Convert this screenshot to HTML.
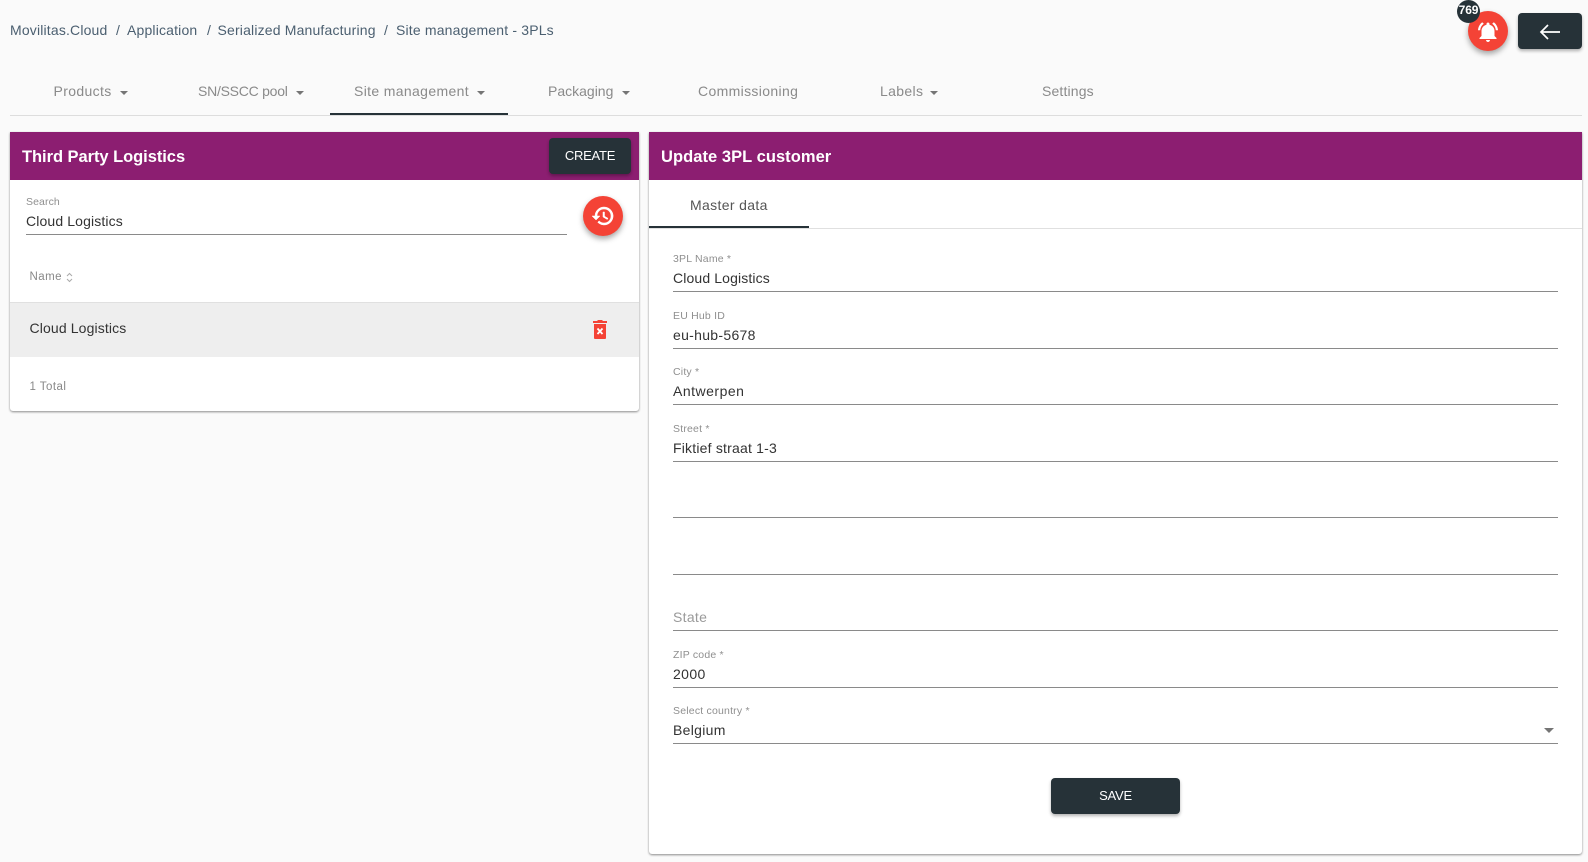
<!DOCTYPE html>
<html><head><meta charset="utf-8"><title>Site management - 3PLs</title>
<style>
html,body{margin:0;padding:0;width:1588px;height:862px;overflow:hidden;background:#fafafa;font-family:"Liberation Sans",sans-serif}
.a{position:absolute;white-space:nowrap}
.crumb{top:22px;height:16px;line-height:16px;font-size:14px;color:#4b5f70;letter-spacing:.17px}
.tab{top:82px;height:18px;line-height:18px;font-size:14px;letter-spacing:.35px;color:#8a8a8a}
.car{width:0;height:0;border-left:4.5px solid transparent;border-right:4.5px solid transparent;border-top:4.5px solid #757575;top:91px}
.panel{background:#fff;border-radius:0 0 3px 3px;box-shadow:0 1px 2px rgba(0,0,0,.45)}
.head{background:#8c1e71;height:48px;top:132px}
.title{top:146.500px;height:20px;line-height:20px;font-size:16.500px;font-weight:bold;color:#fff}
.btn{background:#263238;border-radius:4px;color:#fff;text-align:center;font-size:13px;letter-spacing:-.25px;box-shadow:0 2px 3px rgba(0,0,0,.3)}
.lab{height:12px;line-height:12px;font-size:10.500px;color:#8f8f8f;letter-spacing:.2px;margin-top:.5px}
.val{height:18px;line-height:18px;font-size:14px;color:#333;letter-spacing:.13px}
.line{left:673px;width:885px;height:1px;background:#8a8a8a}
.fab{border-radius:50%;background:#f44336;width:40px;height:40px;box-shadow:0 3px 6px rgba(0,0,0,.35)}
</style></head>
<body>
<div class="a crumb" style="left:10px">Movilitas.Cloud</div>
<div class="a crumb" style="left:116px">/</div>
<div class="a crumb" style="left:127px">Application</div>
<div class="a crumb" style="left:207px">/</div>
<div class="a crumb" style="left:217.500px">Serialized Manufacturing</div>
<div class="a crumb" style="left:384px">/</div>
<div class="a crumb" style="left:396px">Site management - 3PLs</div>

<div class="a fab" style="left:1468px;top:11px"></div>
<svg class="a" style="left:1476px;top:20px" width="24" height="24" viewBox="0 0 24 24" fill="#fff"><path d="M12 22c1.100 0 2-.9 2-2h-4c0 1.100.9 2 2 2zm6.500-6v-5c0-3.100-2-5.600-5-6.300V4c0-.8-.7-1.500-1.500-1.500s-1.500.7-1.500 1.500v.7c-3 .7-5 3.200-5 6.300v5l-2 2v1h17v-1l-2-2z"/><path d="M7.800 3.800 6.200 2.200C3.800 4 2.200 6.900 2 10.200h2.200c.2-2.600 1.500-4.900 3.600-6.400zM19.800 10.200H22c-.2-3.300-1.800-6.200-4.200-8l-1.600 1.600c2.100 1.500 3.400 3.800 3.600 6.400z"/></svg>
<div class="a" style="left:1457px;top:0;width:23px;height:23px;border-radius:50%;background:#263238;color:#fff;font-size:12px;font-weight:bold;text-align:center;line-height:21px;letter-spacing:-.1px">769</div>
<div class="a btn" style="left:1518px;top:13px;width:64px;height:36px"></div>
<svg class="a" style="left:1538px;top:20px" width="24" height="24" viewBox="0 0 24 24" fill="none" stroke="#fff" stroke-width="1.700"><path d="M22 12H3M10 5l-7 7 7 7"/></svg>

<div class="a tab" style="left:53.500px">Products</div><div class="a car" style="left:120px"></div>
<div class="a tab" style="left:198px;letter-spacing:-.25px">SN/SSCC pool</div><div class="a car" style="left:296px"></div>
<div class="a tab" style="left:354px">Site management</div><div class="a car" style="left:477px"></div>
<div class="a tab" style="left:548px;letter-spacing:0">Packaging</div><div class="a car" style="left:622px"></div>
<div class="a tab" style="left:698px">Commissioning</div>
<div class="a tab" style="left:880px">Labels</div><div class="a car" style="left:930px"></div>
<div class="a tab" style="left:1042px;letter-spacing:.15px">Settings</div>
<div class="a" style="left:10px;top:115px;width:1572px;height:1px;background:#ddd"></div>
<div class="a" style="left:330px;top:113px;width:178px;height:2px;background:#263238"></div>

<!-- left panel -->
<div class="a panel" style="left:10px;top:132px;width:629px;height:279px"></div>
<div class="a head" style="left:10px;width:629px"></div>
<div class="a title" style="left:22px;letter-spacing:-.05px">Third Party Logistics</div>
<div class="a btn" style="left:549px;top:138px;width:82px;height:36px;line-height:36px">CREATE</div>
<div class="a lab" style="left:26px;top:195px;letter-spacing:.1px">Search</div>
<div class="a val" style="left:26px;top:212px">Cloud Logistics</div>
<div class="a" style="left:26px;top:234px;width:541px;height:1px;background:#8a8a8a"></div>
<div class="a fab" style="left:583px;top:196px"></div>
<svg class="a" style="left:591px;top:204px" width="24" height="24" viewBox="0 0 24 24" fill="#fff" stroke="#fff" stroke-width=".5"><path d="M13 3a9 9 0 0 0-9 9H1l3.900 3.900.1.100L9 12H6c0-3.900 3.100-7 7-7s7 3.100 7 7-3.100 7-7 7c-1.900 0-3.700-.8-4.900-2.100l-1.400 1.400A9 9 0 1 0 13 3zm-1 5v5l4.300 2.500.7-1.200-3.500-2.100V8z"/></svg>
<div class="a" style="left:29.500px;top:270px;height:14px;line-height:14px;font-size:11.500px;color:#888;letter-spacing:.45px">Name</div>
<svg class="a" style="left:66px;top:272px" width="7" height="11" viewBox="0 0 7 11" fill="none" stroke="#aaa"><path d="M1 4l2.500-2.500L6 4M1 7l2.500 2.500L6 7"/></svg>
<div class="a" style="left:10px;top:302px;width:629px;height:55px;background:#eee;border-top:1px solid #e0e0e0;box-sizing:border-box"></div>
<div class="a val" style="left:29.500px;top:319px">Cloud Logistics</div>
<svg class="a" style="left:590px;top:318px" width="20" height="22" viewBox="0 0 20 22" fill="#f44336"><path d="M3 3h4l1-1h4l1 1h4v2H3zM4 6h12v14a1 1 0 0 1-1 1H5a1 1 0 0 1-1-1z"/><path d="M7.500 10.500l5 5.500M12.500 10.500l-5 5.500" stroke="#fff" stroke-width="1.800"/></svg>
<div class="a" style="left:29.500px;top:379.500px;height:14px;line-height:14px;font-size:11.500px;color:#888;letter-spacing:.45px">1 Total</div>

<!-- right panel -->
<div class="a panel" style="left:649px;top:132px;width:933px;height:722px"></div>
<div class="a head" style="left:649px;width:933px"></div>
<div class="a title" style="left:661px;letter-spacing:.05px">Update 3PL customer</div>
<div class="a val" style="left:690px;top:196px;color:#555;letter-spacing:.35px">Master data</div>
<div class="a" style="left:649px;top:228px;width:933px;height:1px;background:#e0e0e0"></div>
<div class="a" style="left:649px;top:226px;width:160px;height:2px;background:#263238"></div>

<div class="a lab" style="left:673px;top:252px">3PL Name *</div>
<div class="a val" style="left:673px;top:269px">Cloud Logistics</div>
<div class="a line" style="top:291px"></div>
<div class="a lab" style="left:673px;top:309px">EU Hub ID</div>
<div class="a val" style="left:673px;top:326px;letter-spacing:.3px">eu-hub-5678</div>
<div class="a line" style="top:348px"></div>
<div class="a lab" style="left:673px;top:365px">City *</div>
<div class="a val" style="left:673px;top:382px;letter-spacing:.5px">Antwerpen</div>
<div class="a line" style="top:404px"></div>
<div class="a lab" style="left:673px;top:422px">Street *</div>
<div class="a val" style="left:673px;top:439px;letter-spacing:.2px">Fiktief straat 1-3</div>
<div class="a line" style="top:461px"></div>
<div class="a line" style="top:517px"></div>
<div class="a line" style="top:574px"></div>
<div class="a val" style="left:673px;top:608px;color:#9a9a9a;letter-spacing:.3px">State</div>
<div class="a line" style="top:630px"></div>
<div class="a lab" style="left:673px;top:648px">ZIP code *</div>
<div class="a val" style="left:673px;top:665px;letter-spacing:.4px">2000</div>
<div class="a line" style="top:687px"></div>
<div class="a lab" style="left:673px;top:704px">Select country *</div>
<div class="a val" style="left:673px;top:721px;letter-spacing:.3px">Belgium</div>
<div class="a line" style="top:743px"></div>
<div class="a" style="left:1544px;top:728px;width:0;height:0;border-left:5px solid transparent;border-right:5px solid transparent;border-top:5px solid #757575"></div>
<div class="a btn" style="left:1051px;top:778px;width:129px;height:36px;line-height:36px">SAVE</div>
</body></html>
